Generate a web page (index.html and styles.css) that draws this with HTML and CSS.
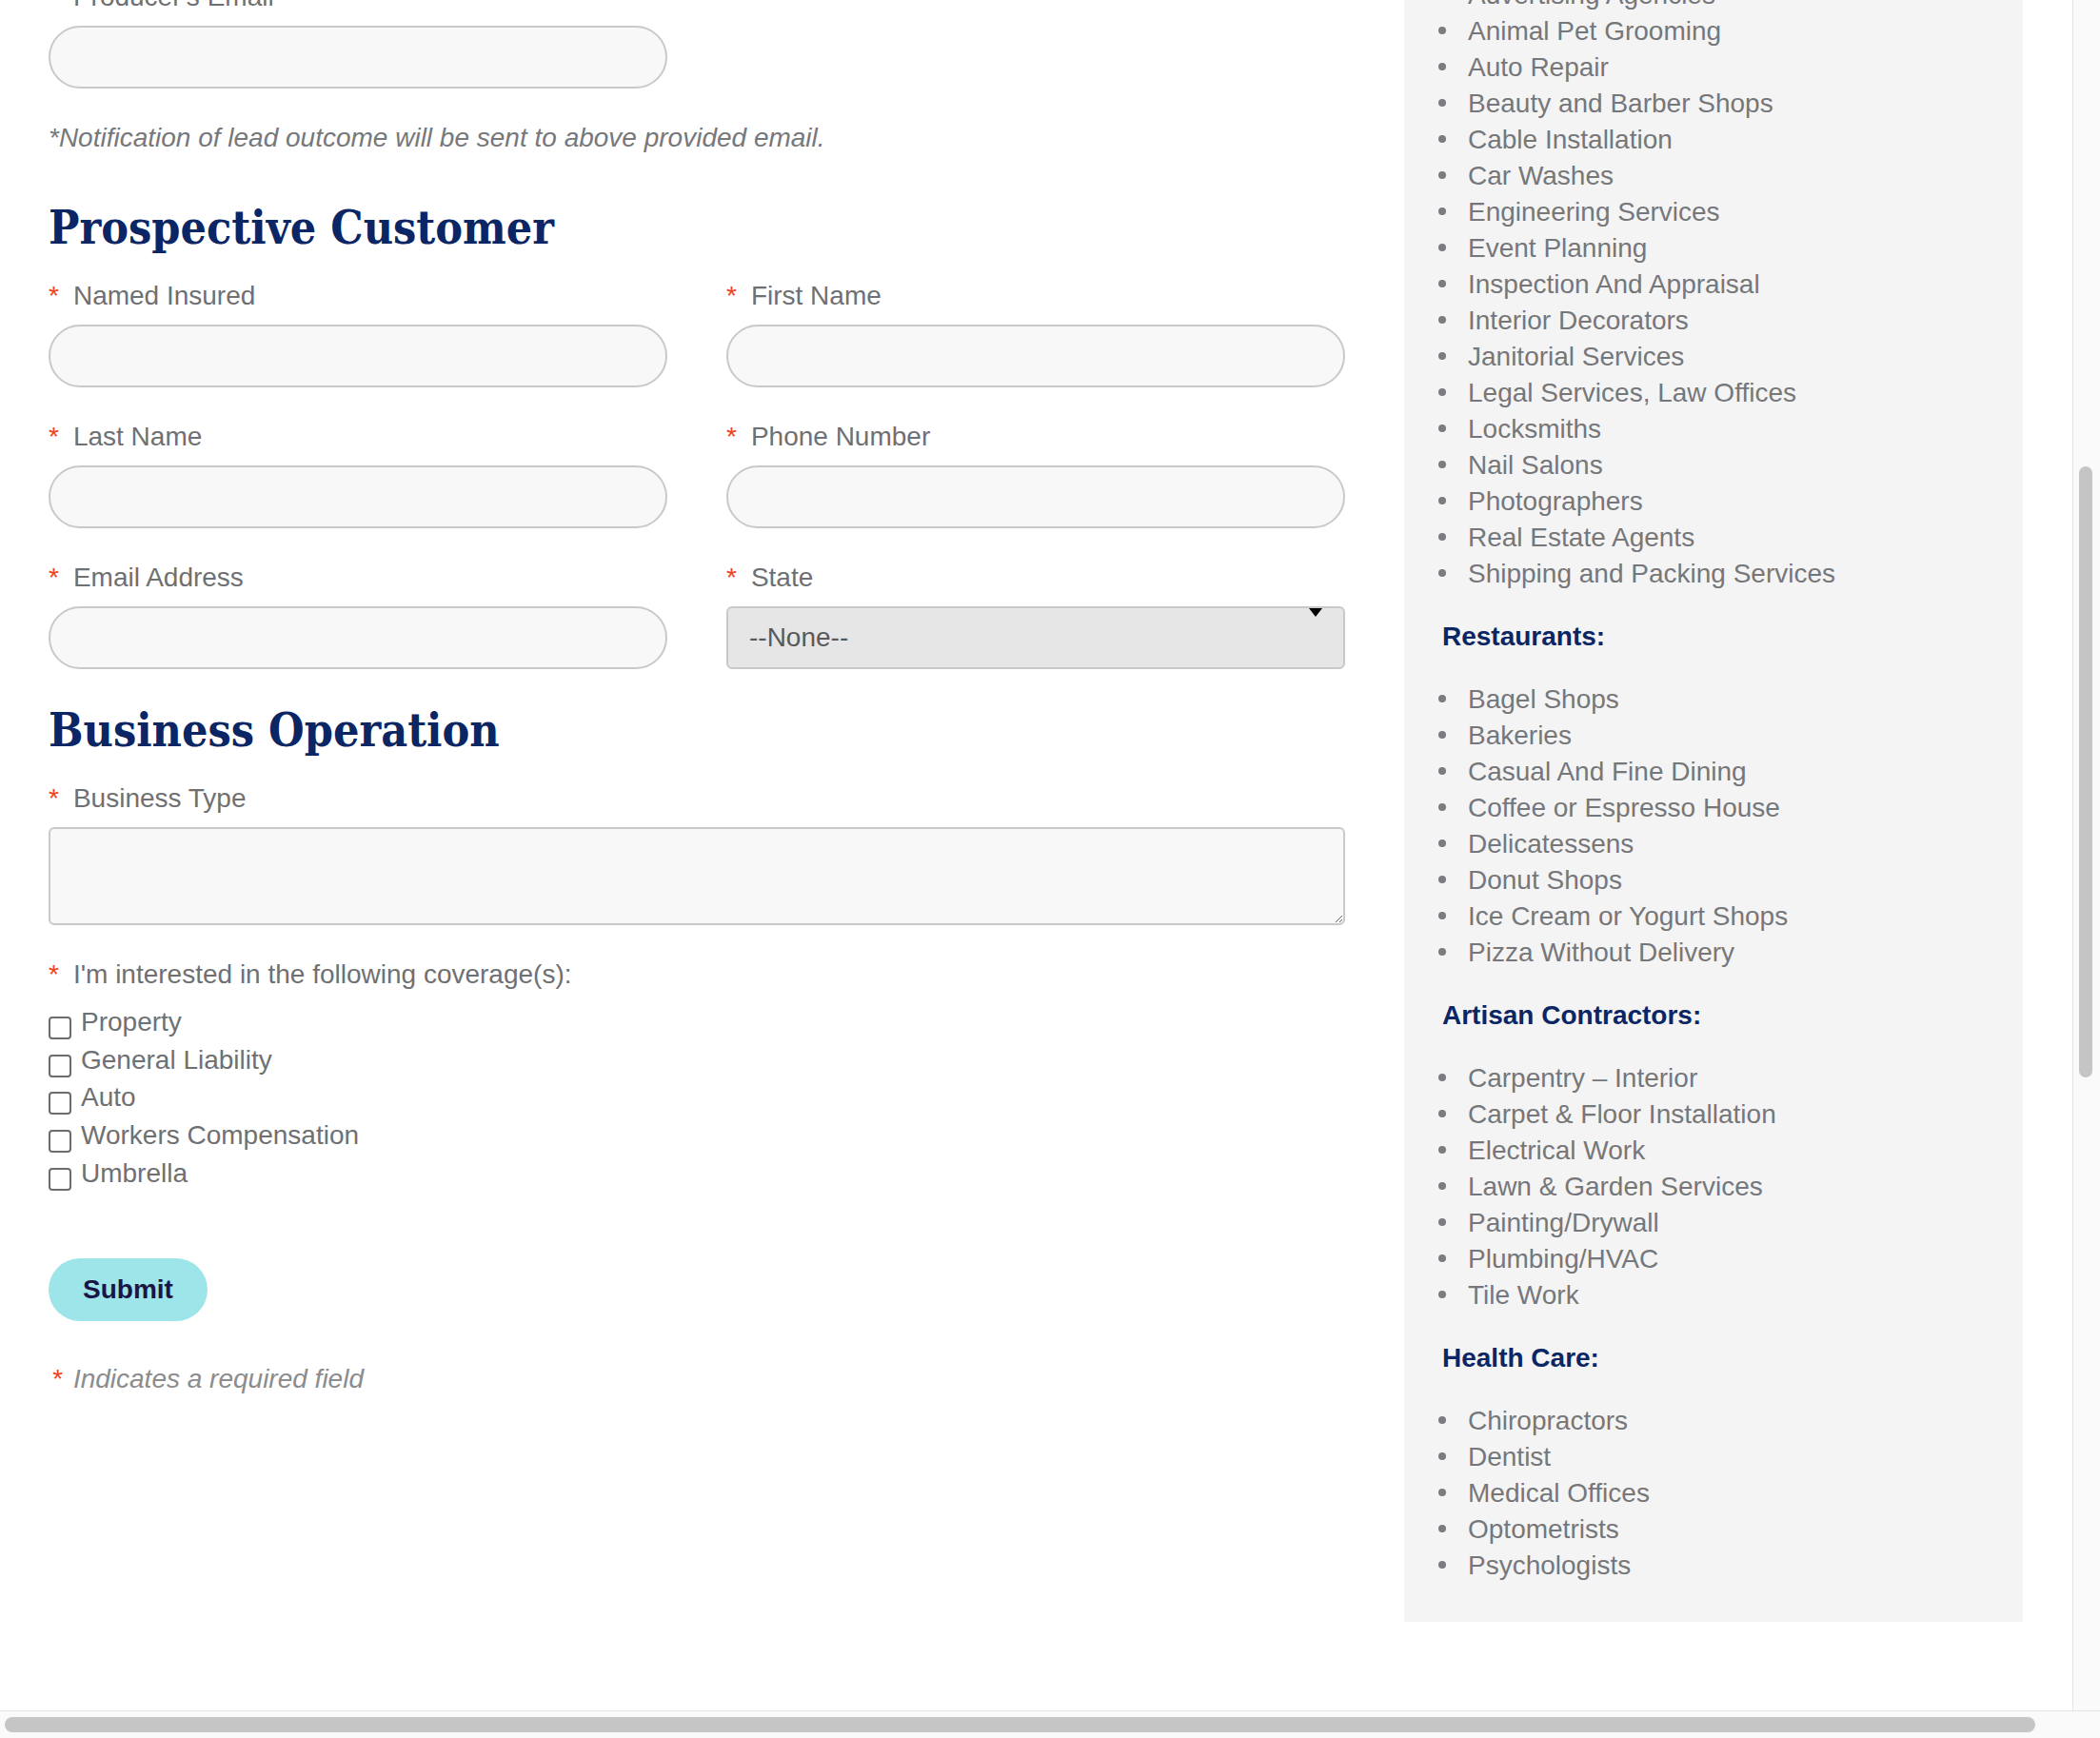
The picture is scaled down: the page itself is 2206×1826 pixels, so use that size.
FILE: index.html
```html
<!DOCTYPE html>
<html lang="en">
<head>
<meta charset="utf-8">
<title>Lead Referral Form</title>
<link rel="stylesheet" href="styles.css">
</head>
<body>
<div class="page">
  <main class="form">
    <div class="field half">
      <label class="label"><span class="star">*</span>Producer's Email</label>
      <input class="control" type="email">
    </div>
    <p class="note">*Notification of lead outcome will be sent to above provided email.</p>

    <h2 class="h-first">Prospective Customer</h2>
    <div class="grid2">
      <div class="field">
        <label class="label"><span class="star">*</span>Named Insured</label>
        <input class="control" type="text">
      </div>
      <div class="field">
        <label class="label"><span class="star">*</span>First Name</label>
        <input class="control" type="text">
      </div>
      <div class="field">
        <label class="label"><span class="star">*</span>Last Name</label>
        <input class="control" type="text">
      </div>
      <div class="field">
        <label class="label"><span class="star">*</span>Phone Number</label>
        <input class="control" type="tel">
      </div>
      <div class="field">
        <label class="label"><span class="star">*</span>Email Address</label>
        <input class="control" type="email">
      </div>
      <div class="field">
        <label class="label"><span class="star">*</span>State</label>
        <div class="select-wrap">
          <select class="control select"><option>--None--</option></select>
          <span class="caret"></span>
        </div>
      </div>
    </div>

    <h2 class="h-second">Business Operation</h2>
    <div class="field">
      <label class="label"><span class="star">*</span>Business Type</label>
      <textarea class="control area"></textarea>
    </div>
    <div class="field cover">
      <div class="label"><span class="star">*</span>I'm interested in the following coverage(s):</div>
      <div class="checks">
        <label class="check"><input type="checkbox" class="box">Property</label>
        <label class="check"><input type="checkbox" class="box">General Liability</label>
        <label class="check"><input type="checkbox" class="box">Auto</label>
        <label class="check"><input type="checkbox" class="box">Workers Compensation</label>
        <label class="check"><input type="checkbox" class="box">Umbrella</label>
      </div>
    </div>

    <button class="submit" type="button">Submit</button>
    <p class="required"><span class="star">*</span>Indicates a required field</p>
  </main>

  <aside class="sidebar">
    <ul class="list">
      <li>Advertising Agencies</li>
      <li>Animal Pet Grooming</li>
      <li>Auto Repair</li>
      <li>Beauty and Barber Shops</li>
      <li>Cable Installation</li>
      <li>Car Washes</li>
      <li>Engineering Services</li>
      <li>Event Planning</li>
      <li>Inspection And Appraisal</li>
      <li>Interior Decorators</li>
      <li>Janitorial Services</li>
      <li>Legal Services, Law Offices</li>
      <li>Locksmiths</li>
      <li>Nail Salons</li>
      <li>Photographers</li>
      <li>Real Estate Agents</li>
      <li>Shipping and Packing Services</li>
    </ul>
    <h4 class="group">Restaurants:</h4>
    <ul class="list">
      <li>Bagel Shops</li>
      <li>Bakeries</li>
      <li>Casual And Fine Dining</li>
      <li>Coffee or Espresso House</li>
      <li>Delicatessens</li>
      <li>Donut Shops</li>
      <li>Ice Cream or Yogurt Shops</li>
      <li>Pizza Without Delivery</li>
    </ul>
    <h4 class="group">Artisan Contractors:</h4>
    <ul class="list">
      <li>Carpentry – Interior</li>
      <li>Carpet &amp; Floor Installation</li>
      <li>Electrical Work</li>
      <li>Lawn &amp; Garden Services</li>
      <li>Painting/Drywall</li>
      <li>Plumbing/HVAC</li>
      <li>Tile Work</li>
    </ul>
    <h4 class="group">Health Care:</h4>
    <ul class="list">
      <li>Chiropractors</li>
      <li>Dentist</li>
      <li>Medical Offices</li>
      <li>Optometrists</li>
      <li>Psychologists</li>
    </ul>
  </aside>
</div>

<div class="vbar"><div class="vthumb"></div></div>
<div class="hbar"><div class="hthumb"></div></div>
</body>
</html>
```

FILE: styles.css
```css
* {
  box-sizing: border-box;
}

html,
body {
  margin: 0;
  padding: 0;
  background: #ffffff;
}

body {
  font-family: "Liberation Sans", Arial, Helvetica, sans-serif;
  font-size: 28px;
  line-height: 38px;
  color: #6f7072;
  overflow: hidden;
  height: 1826px;
}

.page {
  display: grid;
  grid-template-columns: 1362px 650px;
  column-gap: 62px;
  align-items: start;
  padding-left: 51px;
  margin-top: -100px;
}

/* ---------- form column ---------- */
.form {
  padding-top: 78px;
}

.half {
  width: 650px;
}

.label {
  display: block;
  height: 38px;
  white-space: nowrap;
}

.star {
  color: #f2421b;
  margin-right: 15px;
}

.control {
  display: block;
  width: 100%;
  height: 66px;
  margin: 11px 0 0;
  padding: 0 24px;
  border: 2px solid #c9c9c9;
  border-radius: 33px;
  background: #f8f8f8;
  font: inherit;
  color: #555555;
  -webkit-appearance: none;
  appearance: none;
  outline: none;
}

.note {
  margin: 33px 0 0;
  font-style: italic;
  color: #77787b;
}

h2 {
  font-family: "DejaVu Serif Condensed", "DejaVu Serif", "Liberation Serif", serif;
  font-stretch: condensed;
  font-weight: bold;
  font-size: 48px;
  letter-spacing: 0;
  line-height: 58px;
  color: #0b2664;
  margin: 0 0 24px;
}

.h-first {
  margin-top: 46px;
}

.h-second {
  margin-top: 35px;
}

.grid2 {
  display: grid;
  grid-template-columns: 650px 650px;
  column-gap: 62px;
  row-gap: 33px;
}

.select-wrap {
  position: relative;
  margin-top: 11px;
}

.select {
  margin-top: 0;
  border-radius: 6px;
  background: #e6e6e6;
  border-color: #c8c8c8;
  color: #58595b;
  padding-left: 22px;
}

.caret {
  position: absolute;
  top: 2px;
  right: 24px;
  width: 0;
  height: 0;
  border-left: 7px solid transparent;
  border-right: 7px solid transparent;
  border-top: 9px solid #000000;
}

.area {
  height: 103px;
  border-radius: 6px;
  resize: both;
  padding: 10px 16px;
}

.cover {
  margin-top: 33px;
}

.checks {
  margin-top: 11px;
}

.check {
  display: flex;
  align-items: flex-start;
  height: 39.7px;
  line-height: 39.7px;
  white-space: nowrap;
}

.box {
  -webkit-appearance: none;
  appearance: none;
  flex: none;
  width: 24px;
  height: 24px;
  margin: 14px 10px 0 0;
  border: 2px solid #6d6d6d;
  border-radius: 4px;
  background: #ffffff;
}

.submit {
  display: block;
  width: 167px;
  height: 66px;
  margin-top: 70px;
  padding: 0;
  border: none;
  border-radius: 33px;
  background: #9de5e9;
  color: #1b1547;
  font-family: "Liberation Sans", Arial, sans-serif;
  font-weight: bold;
  font-size: 28px;
}

.required {
  margin: 42px 0 0;
  font-style: italic;
  color: #8b8c8e;
}

.required .star {
  margin-left: 3px;
  margin-right: 12px;
}

/* ---------- sidebar ---------- */
.sidebar {
  background: #f4f4f4;
  padding: 76px 40px 40px;
}

.group {
  margin: 28px 0;
  font-size: 28px;
  line-height: 38px;
  font-weight: bold;
  color: #0b2664;
}

.list {
  list-style: none;
  margin: 0;
  padding: 0;
}

.list li {
  white-space: nowrap;
  color: #76777a;
}

.list li::before {
  content: "";
  display: inline-block;
  width: 8px;
  height: 8px;
  border-radius: 50%;
  background: #7b7c7f;
  margin-left: -4px;
  margin-right: 23px;
  vertical-align: 6px;
}

/* ---------- browser scrollbars (overlay) ---------- */
.vbar {
  position: fixed;
  top: 0;
  right: 0;
  width: 29px;
  height: 1797px;
  background: #fafafa;
  border-left: 1px solid #e3e3e3;
}

.vthumb {
  position: absolute;
  left: 6px;
  top: 490px;
  width: 14px;
  height: 642px;
  border-radius: 7px;
  background: #c5c5c5;
}

.hbar {
  position: fixed;
  left: 0;
  bottom: 0;
  width: 2206px;
  height: 29px;
  background: #fafafa;
  border-top: 1px solid #e3e3e3;
}

.hthumb {
  position: absolute;
  left: 5px;
  top: 6px;
  width: 2133px;
  height: 16px;
  border-radius: 8px;
  background: #c5c5c5;
}
```
